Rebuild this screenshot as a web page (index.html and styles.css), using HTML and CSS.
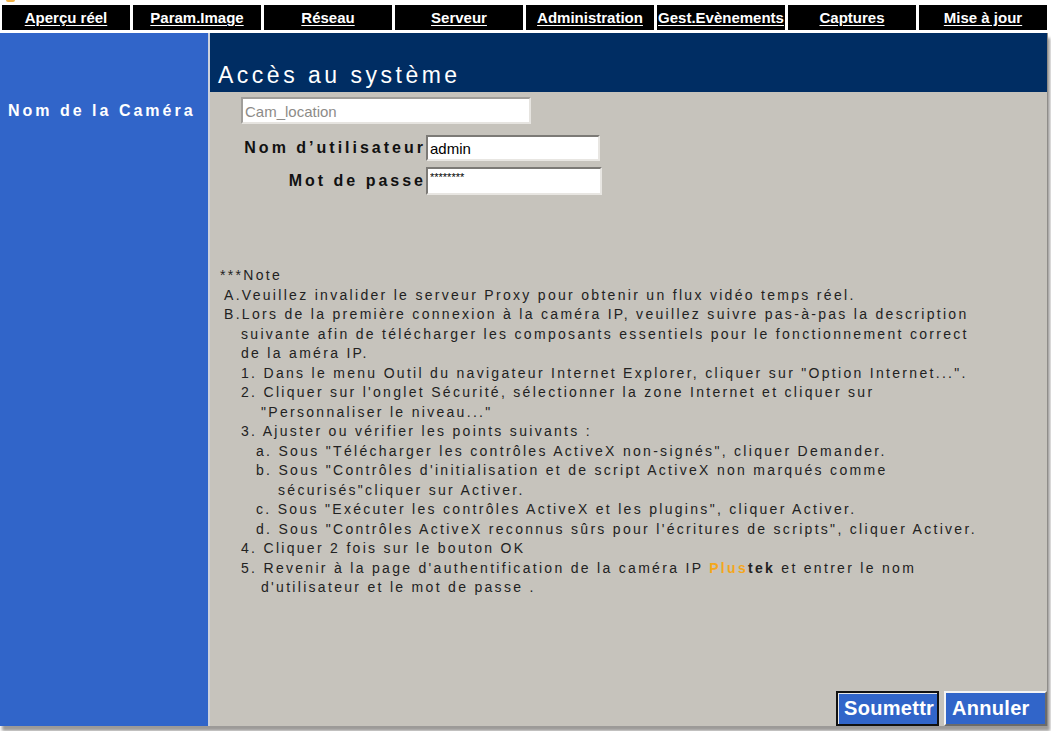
FILE: index.html
```html
<!DOCTYPE html>
<html lang="fr">
<head>
  <meta charset="UTF-8" />
  <title>Accès au système</title>
  <link rel="stylesheet" href="styles.css">
</head>
<body>
  <div class="topstrip"><span class="logo-tip"></span></div>

  <div class="menu">
    <a href="#">Aperçu réel</a>
    <a href="#">Param.Image</a>
    <a href="#">Réseau</a>
    <a href="#">Serveur</a>
    <a href="#">Administration</a>
    <a href="#">Gest.Evènements</a>
    <a href="#">Captures</a>
    <a href="#">Mise à jour</a>
  </div>

  <div class="frame">
    <div class="side">
      <div class="side-label">Nom de la Caméra</div>
    </div>

    <div class="panel">
      <div class="head">Accès au système</div>

      <div class="form">
        <div class="row cam">
          <input type="text" class="field cam-field" value="Cam_location" readonly>
        </div>
        <div class="row user">
          <label class="lbl">Nom d’utilisateur</label>
          <input type="text" class="field user-field" value="admin">
        </div>
        <div class="row pass">
          <label class="lbl">Mot de passe</label>
          <input type="text" class="field pass-field" value="********">
        </div>
      </div>

      <div class="note">
        <div class="l0">***Note</div>
        <div class="l1">A.Veuillez invalider le serveur Proxy pour obtenir un flux vidéo temps réel.</div>
        <div class="l1">B.Lors de la première connexion à la caméra IP, veuillez suivre pas-à-pas la description</div>
        <div class="l2">suivante afin de télécharger les composants essentiels pour le fonctionnement correct</div>
        <div class="l2">de la améra IP.</div>
        <div class="l2">1. Dans le menu Outil du navigateur Internet Explorer, cliquer sur "Option Internet...".</div>
        <div class="l2">2. Cliquer sur l'onglet Sécurité, sélectionner la zone Internet et cliquer sur</div>
        <div class="l4">"Personnaliser le niveau..."</div>
        <div class="l2">3. Ajuster ou vérifier les points suivants :</div>
        <div class="l3">a. Sous "Télécharger les contrôles ActiveX non-signés", cliquer Demander.</div>
        <div class="l3">b. Sous "Contrôles d'initialisation et de script ActiveX non marqués comme</div>
        <div class="l5">sécurisés"cliquer sur Activer.</div>
        <div class="l3">c. Sous "Exécuter les contrôles ActiveX et les plugins", cliquer Activer.</div>
        <div class="l3">d. Sous "Contrôles ActiveX reconnus sûrs pour l'écritures de scripts", cliquer Activer.</div>
        <div class="l2">4. Cliquer 2 fois sur le bouton OK</div>
        <div class="l2">5. Revenir à la page d'authentification de la caméra IP <b class="plus">Plus</b><b>tek</b> et entrer le nom</div>
        <div class="l4">d'utilisateur et le mot de passe .</div>
      </div>

      <div class="actions">
        <button class="btn btn-focus">Soumettr</button>
        <button class="btn">Annuler</button>
      </div>
    </div>
  </div>
</body>
</html>
```

FILE: styles.css
```css
body {
  margin: 0;
  background: #fff;
  font-family: 'Liberation Sans', Arial, sans-serif;
  width: 1051px;
  height: 731px;
  overflow: hidden;
}

.topstrip {
  height: 5px;
}

.logo-tip {
  display: block;
  margin-left: 6px;
  width: 9px;
  height: 2px;
  background: #f2b347;
  border-radius: 0 0 4px 4px;
}

.menu {
  display: grid;
  grid-template-columns: repeat(8, 1fr);
  gap: 3px;
  margin: 0 4px 0 2px;
  height: 25px;
}

.menu a {
  background: #000;
  color: #fff;
  font-weight: bold;
  font-size: 15px;
  line-height: 25px;
  text-align: center;
  text-decoration: underline;
  text-underline-offset: 2px;
  white-space: nowrap;
  overflow: hidden;
}

.frame {
  display: flex;
  width: 1048px;
  height: 693px;
  margin-top: 3px;
  box-shadow: 2px 5px 3px #9c9a98;
}

.side {
  width: 210px;
  flex: none;
  background: #3165c9;
  border-right: 2px solid #cdd2dc;
  padding: 69px 0 0 8px;
  box-sizing: border-box;
}

.side-label {
  color: #fff;
  font-weight: bold;
  font-size: 16px;
  line-height: 18px;
  letter-spacing: 3px;
  white-space: nowrap;
}

.panel {
  flex: 1;
  display: flex;
  flex-direction: column;
  background: #c6c3bc;
  border-right: 1px solid #8f8d89;
}

.head {
  height: 59px;
  flex: none;
  box-sizing: border-box;
  background: #002d63;
  color: #fff;
  font-size: 23px;
  line-height: 26px;
  letter-spacing: 3.5px;
  display: flex;
  align-items: flex-end;
  padding: 0 0 4px 8px;
}

.form {
  margin-top: 5px;
}

.row {
  display: flex;
  align-items: center;
}

.cam {
  padding-left: 31px;
}

.user {
  margin-top: 11px;
}

.pass {
  margin-top: 6px;
}

.lbl {
  width: 216px;
  flex: none;
  text-align: right;
  font-weight: bold;
  font-size: 16px;
  letter-spacing: 3px;
  color: #111;
}

.field {
  box-sizing: border-box;
  margin: 0;
  padding: 1px 2px 0;
  font-family: 'Liberation Sans', Arial, sans-serif;
  font-size: 15px;
  color: #000;
  background: #fff;
  border: 2px solid;
  border-color: #7c7a76 #e8e6e2 #e8e6e2 #7c7a76;
  outline: none;
}

.cam-field {
  width: 290px;
  height: 27px;
  color: #8d8b88;
  border-color: #a09e9a #e6e4e0 #e6e4e0 #a09e9a;
}

.user-field {
  width: 174px;
  height: 26px;
}

.pass-field {
  width: 176px;
  height: 28px;
  font-size: 11px;
  padding-bottom: 10px;
}

.note {
  margin-top: 71px;
  padding-left: 10px;
  font-size: 14px;
  line-height: 19.5px;
  letter-spacing: 2.3px;
  color: #222;
  white-space: nowrap;
}

.l1 { padding-left: 4px; }
.l2 { padding-left: 21px; }
.l3 { padding-left: 36px; }
.l4 { padding-left: 41px; }
.l5 { padding-left: 58px; }

.plus {
  color: #f4a71c;
}

.actions {
  margin-top: auto;
  display: flex;
  justify-content: flex-end;
  gap: 5px;
}

.btn {
  width: 103px;
  height: 35px;
  box-sizing: border-box;
  margin: 0;
  padding: 0 0 0 6px;
  text-align: left;
  white-space: nowrap;
  background: #3165c9;
  color: #fff;
  font-family: 'Liberation Sans', Arial, sans-serif;
  font-weight: bold;
  font-size: 20px;
  letter-spacing: 0.3px;
  border: 2px solid;
  border-color: #f4f4f4 #6b6b6b #6b6b6b #f4f4f4;
  cursor: pointer;
}

.btn-focus {
  border: 2px solid #111;
  box-shadow: inset 1px 1px 0 #e8e8e8;
}
```
